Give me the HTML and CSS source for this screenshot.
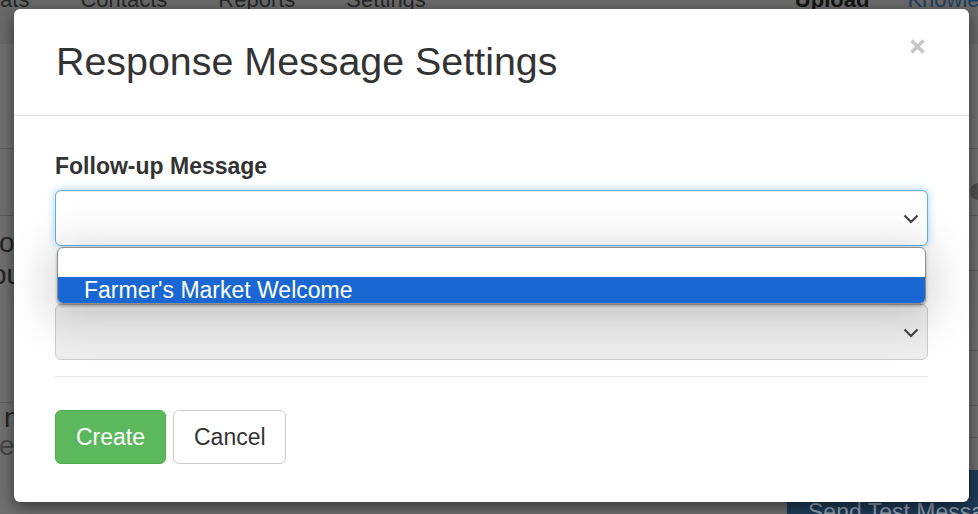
FILE: index.html
```html
<!DOCTYPE html>
<html lang="en">
<head>
<meta charset="utf-8">
<title>Response Message Settings</title>
<link rel="stylesheet" href="styles.css">
</head>
<body>
<div class="page">
  <nav class="nav">
    <span class="nav-link chats">Chats</span>
    <span class="nav-link">Contacts</span>
    <span class="nav-link">Reports</span>
    <span class="nav-link">Settings</span>
    <span class="nav-link upload">Upload</span>
    <span class="nav-link kb">Knowledge Base</span>
  </nav>
  <div class="content">
    <div class="side left-side">
      <div class="row lr1"></div>
      <div class="row lr2"></div>
      <div class="row lr3"><p class="bg-text t-o">o</p><p class="bg-text t-ou">ou</p></div>
      <div class="row lr4"><p class="bg-text t-n">n</p><p class="bg-text t-el">el</p></div>
    </div>
    <div class="side right-side">
      <div class="row rr1"></div>
      <div class="row rr2"><span class="circle"></span></div>
      <div class="row rr3"></div>
      <div class="row rr4"></div>
      <div class="row rr5"></div>
      <div class="row rr6"></div>
      <div class="row rr7"></div>
    </div>
  </div>
  <div class="footer"><span class="send">Send Test Message</span></div>
</div>

<div class="modal">
  <div class="modal-header">
    <h3 class="modal-title">Response Message Settings</h3>
    <span class="close" aria-label="Close">
      <svg width="17" height="17" viewBox="0 0 17 17"><path d="M2.5 2.5 L14.5 14.5 M14.5 2.5 L2.5 14.5" stroke="#c6c6c6" stroke-width="3.6" stroke-linecap="butt"/></svg>
    </span>
  </div>
  <div class="modal-body">
    <div class="form">
      <label class="label">Follow-up Message</label>
      <div class="select focused">
        <svg class="chev" width="16" height="10" viewBox="0 0 16 10"><path d="M1.5 1.5 L8 8 L14.5 1.5" fill="none" stroke="#444" stroke-width="2.2"/></svg>
      </div>
      <div class="select disabled">
        <svg class="chev" width="16" height="10" viewBox="0 0 16 10"><path d="M1.5 1.5 L8 8 L14.5 1.5" fill="none" stroke="#444" stroke-width="2.2"/></svg>
      </div>
      <ul class="dropdown">
        <li class="option blank"></li>
        <li class="option selected">Farmer's Market Welcome</li>
      </ul>
    </div>
    <hr class="divider">
    <div class="actions">
      <button class="btn btn-create">Create</button>
      <button class="btn btn-cancel">Cancel</button>
    </div>
  </div>
</div>
</body>
</html>
```

FILE: styles.css
```css
* { box-sizing: border-box; }

html, body {
  margin: 0;
  padding: 0;
}

body {
  width: 978px;
  height: 514px;
  overflow: hidden;
  position: relative;
  background: #6f6f6f;
  font-family: "Liberation Sans", Arial, sans-serif;
}

.page {
  display: flex;
  flex-direction: column;
  height: 514px;
}

.nav {
  display: flex;
  align-items: flex-start;
  height: 59px;
  margin-top: -15px;
  background: #696969;
  flex-shrink: 0;
  white-space: nowrap;
}

.nav-link {
  font-size: 22px;
  line-height: 30px;
  color: #262626;
  margin-left: 51px;
  flex-shrink: 0;
}

.nav-link.chats { margin-left: -28px; }
.nav-link.upload { margin-left: 369px; font-weight: bold; color: #141414; }
.nav-link.kb { margin-left: 38px; color: #1f3f60; }

.content {
  display: flex;
  justify-content: space-between;
  height: 426px;
  flex-shrink: 0;
}

.side { display: flex; flex-direction: column; }
.left-side { width: 40px; }
.right-side { width: 60px; margin-right: -51px; }

.row { border-bottom: 1px solid #5f5f5f; flex-shrink: 0; }

.lr1 { height: 105px; }
.lr2 { height: 67px; }
.lr3 { height: 187px; padding-top: 11px; }
.lr4 { flex: 1; border-bottom: none; padding-top: 1px; }

.rr1 { height: 105px; }
.rr2 { height: 67px; padding: 34px 0 0 1px; }
.rr3 { height: 55px; }
.rr4 { height: 80px; }
.rr5 { height: 55px; }
.rr6 { height: 32px; }
.rr7 { flex: 1; border-bottom: none; }

.circle {
  display: block;
  width: 17px;
  height: 17px;
  border-radius: 50%;
  background: #4e4e4e;
}

.bg-text {
  margin: 0;
  font-size: 28px;
  color: #242424;
  white-space: nowrap;
}

.lr3 .bg-text { line-height: 32px; }
.lr4 .bg-text { line-height: 28px; }
.t-o { text-indent: -1px; }
.t-ou { text-indent: -9px; }
.t-n { text-indent: 4px; }
.t-el { text-indent: -1px; color: #454545; }

.footer {
  display: flex;
  justify-content: flex-end;
  flex: 1;
}

.send {
  display: block;
  width: 191px;
  padding: 26px 0 0 21px;
  background: #1e3b58;
  color: #93a1b0;
  font-size: 23px;
  line-height: 33px;
  white-space: nowrap;
  overflow: hidden;
}

/* Modal */
.modal {
  position: absolute;
  left: 14px;
  top: 9px;
  width: 955px;
  height: 493px;
  background: #fff;
  border-radius: 6px;
  box-shadow: 0 5px 15px rgba(0, 0, 0, 0.5);
  color: #333;
}

.modal-header {
  height: 107px;
  padding: 31px 43px 0 42px;
  border-bottom: 1px solid #e5e5e5;
  display: flex;
  justify-content: space-between;
  align-items: flex-start;
}

.modal-title {
  margin: 0;
  font-size: 39.4px;
  line-height: 43.4px;
  font-weight: normal;
  color: #333;
}

.close {
  display: block;
  margin-top: -2px;
  width: 17px;
  height: 17px;
}

.close svg { display: block; }

.modal-body {
  padding: 34px 41px 0 41px;
}

.form {
  position: relative;
}

.label {
  display: block;
  margin: 0 0 7px;
  font-size: 23px;
  line-height: 33px;
  font-weight: bold;
  color: #333;
}

.select {
  height: 56px;
  border: 1px solid #ccc;
  border-radius: 6px;
  display: flex;
  justify-content: flex-end;
  align-items: center;
  padding-right: 8px;
  background: #fff;
}

.select.focused {
  border-color: #66afe9;
  box-shadow: inset 0 1px 1px rgba(0, 0, 0, 0.075), 0 0 8px rgba(102, 175, 233, 0.6);
}

.select.disabled {
  margin-top: 58px;
  background: #eee;
}

.chev { display: block; margin-top: 1px; }

.dropdown {
  position: absolute;
  top: 97px;
  left: 2px;
  right: 2px;
  margin: 0;
  padding: 0;
  list-style: none;
  background: #fff;
  border: 1px solid #8e8e8e;
  border-radius: 6px;
  overflow: hidden;
  box-shadow: 0 2px 3px rgba(0, 0, 0, 0.3), 0 8px 44px 8px rgba(0, 0, 0, 0.17);
}

.option {
  font-size: 23px;
  line-height: 26px;
  padding-left: 26px;
  color: #000;
}

.option.blank { height: 29px; }

.option.selected {
  height: 26px;
  background: #1967d2;
  color: #fff;
}

.divider {
  margin: 16px 0 0;
  border: 0;
  border-top: 1px solid #e5e5e5;
  height: 0;
}

.actions {
  display: flex;
  gap: 7px;
  margin-top: 33px;
}

.btn {
  height: 54px;
  font-family: "Liberation Sans", Arial, sans-serif;
  font-size: 23px;
  line-height: 33px;
  border-radius: 6px;
  border: 1px solid #ccc;
  padding: 0 20px;
  margin: 0;
  cursor: pointer;
}

.btn-create {
  width: 111px;
  background: #5cb85c;
  border-color: #4cae4c;
  color: #fff;
}

.btn-cancel {
  width: 113px;
  background: #fff;
  color: #333;
}
```
